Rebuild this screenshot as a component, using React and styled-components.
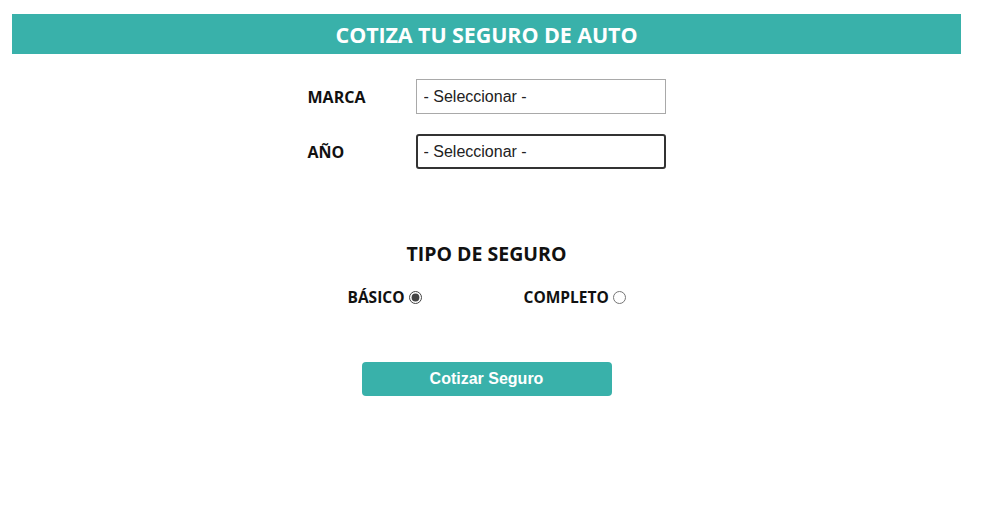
import React, { useState } from 'react';
import styled, { createGlobalStyle } from 'styled-components';

const GlobalStyle = createGlobalStyle`
    body {
        margin: 0;
        background: #ffffff;
        font-family: "Open Sans", "Liberation Sans", sans-serif;
        color: #111;
    }
`;

const Page = styled.div`
    padding: 14px 33px 0 12px;
`;

const Header = styled.h1`
    margin: 0;
    height: 40px;
    display: flex;
    align-items: center;
    justify-content: center;
    background-color: #39b1aa;
    color: #ffffff;
    font-size: 21.5px;
    font-weight: 700;
    letter-spacing: -0.1px;
`;

const Form = styled.form`
    width: 358px;
    margin: 25px auto 0;
    display: flex;
    flex-direction: column;
`;

const Field = styled.div`
    display: flex;
    align-items: center;
    margin-bottom: 20px;
    label {
        width: 108px;
        font-size: 16px;
        font-weight: 700;
        padding-top: 1px;
    }
`;

const Select = styled.select`
    box-sizing: border-box;
    width: 250px;
    height: 35px;
    padding: 0 ${props => props.$focused ? '6px' : '7px'};
    font-family: "Liberation Sans", Arial, sans-serif;
    font-size: 16px;
    color: #222;
    background: #fff;
    border: ${props => props.$focused ? '2px solid #333' : '1px solid #a9a9a9'};
    border-radius: ${props => props.$focused ? '3px' : '0'};
    appearance: none;
    outline: none;
`;

const Title = styled.h2`
    margin: 51px 0 0;
    text-align: center;
    font-size: 19.5px;
    font-weight: 700;
`;

const Options = styled.div`
    display: flex;
    margin: 19px 0 0 40px;
    gap: 102px;
`;

const Option = styled.label`
    display: flex;
    align-items: center;
    gap: 4px;
    font-size: 15.5px;
    font-weight: 700;
    input {
        margin: 0;
        width: 13px;
        height: 13px;
        accent-color: #444;
    }
`;

const Button = styled.button`
    width: 250px;
    height: 34px;
    margin: 54px auto 0;
    border: none;
    border-radius: 4px;
    background-color: #39b1aa;
    color: #fff;
    font-family: "Liberation Sans", Arial, sans-serif;
    font-size: 16px;
    font-weight: 700;
`;

export default function App() {
    const [plan, setPlan] = useState('basico');
    return (
        <>
            <GlobalStyle />
            <Page>
                <Header>COTIZA TU SEGURO DE AUTO</Header>
                <Form onSubmit={e => e.preventDefault()}>
                    <Field>
                        <label>MARCA</label>
                        <Select>
                            <option>- Seleccionar -</option>
                        </Select>
                    </Field>
                    <Field>
                        <label>AÑO</label>
                        <Select $focused>
                            <option>- Seleccionar -</option>
                        </Select>
                    </Field>
                    <Title>TIPO DE SEGURO</Title>
                    <Options>
                        <Option>
                            BÁSICO
                            <input type="radio" name="plan" checked={plan === 'basico'} onChange={() => setPlan('basico')} />
                        </Option>
                        <Option>
                            COMPLETO
                            <input type="radio" name="plan" checked={plan === 'completo'} onChange={() => setPlan('completo')} />
                        </Option>
                    </Options>
                    <Button type="submit">Cotizar Seguro</Button>
                </Form>
            </Page>
        </>
    );
}
